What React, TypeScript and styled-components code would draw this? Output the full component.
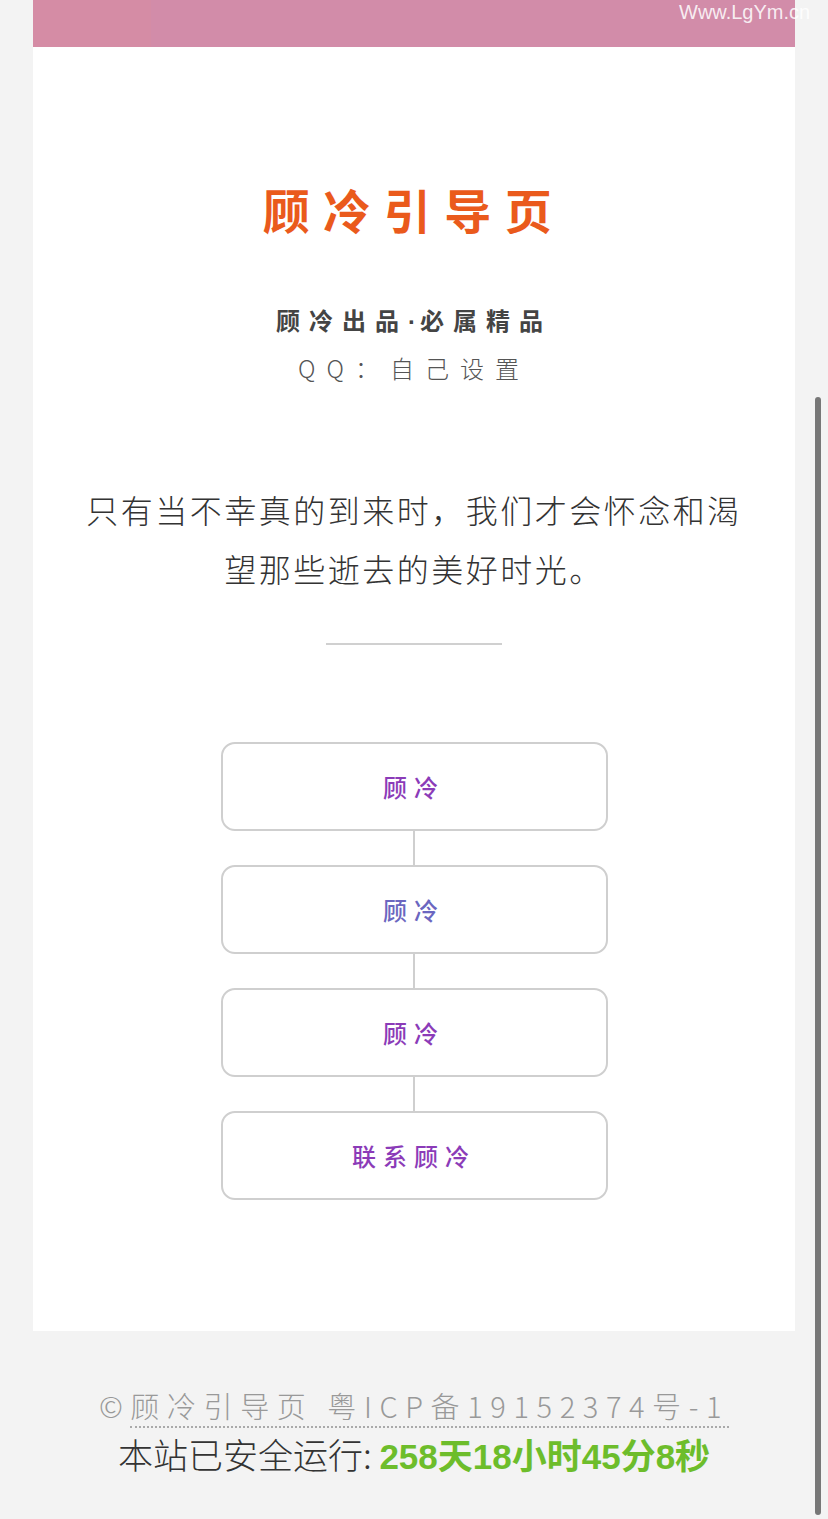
import styled, { createGlobalStyle } from 'styled-components';

const GlobalStyle = createGlobalStyle`
  html, body {
    margin: 0;
    padding: 0;
    background: #f3f3f3;
  }
  body {
    font-family: "Noto Sans CJK SC", "Noto Sans", sans-serif;
  }
`;

const Page = styled.div`
  position: relative;
  min-height: 1519px;
  overflow: hidden;
`;

const Card = styled.div`
  margin: 0 33px;
  background: #fff;
  display: flex;
  flex-direction: column;
  align-items: center;
  padding-bottom: 131px;
`;

const TopBar = styled.div`
  align-self: stretch;
  height: 47px;
  background: linear-gradient(90deg, #d58ca5 0, #d58ca5 118px, #d28ca9 118px, #d28ca9 100%);
`;

const Watermark = styled.div`
  position: absolute;
  top: 1px;
  left: 679px;
  font-family: "Liberation Sans", Arial, sans-serif;
  font-size: 20px;
  color: rgba(255, 255, 255, 0.85);
  white-space: nowrap;
`;

const Title = styled.h1`
  margin: 132px 0 0;
  font-size: 47px;
  line-height: 60px;
  font-weight: 700;
  letter-spacing: 13.5px;
  color: #ea5a1c;
`;

const Sub = styled.div<{ $bold?: boolean }>`
  margin-top: ${(p) => (p.$bold ? '58px' : '0')};
  font-size: 24px;
  line-height: 46px;
  font-weight: ${(p) => (p.$bold ? 700 : 300)};
  letter-spacing: ${(p) => (p.$bold ? '9px' : '11px')};
  color: ${(p) => (p.$bold ? '#444' : '#555')};
`;

const Dot = styled.span`
  font-family: "Liberation Sans", Arial, sans-serif;
  letter-spacing: 4px;
`;

const Quote = styled.p`
  margin: 89px 0 0;
  width: 680px;
  text-align: center;
  font-size: 32px;
  line-height: 59px;
  font-weight: 300;
  letter-spacing: 2.5px;
  color: #333;
`;

const Divider = styled.div`
  margin-top: 45px;
  width: 176px;
  height: 2px;
  background: #d0d0d0;
`;

const Menu = styled.div`
  margin-top: 97px;
  display: flex;
  flex-direction: column;
  align-items: center;
`;

const Button = styled.a<{ $color: string }>`
  box-sizing: border-box;
  width: 387px;
  height: 89px;
  border: 2px solid #cfcfcf;
  border-radius: 14px;
  display: flex;
  align-items: center;
  justify-content: center;
  font-size: 24px;
  font-weight: 500;
  letter-spacing: 7px;
  color: ${(p) => p.$color};
  text-decoration: none;
`;

const Connector = styled.div`
  width: 2px;
  height: 34px;
  background: #cfcfcf;
`;

const Footer = styled.footer`
  padding-top: 50px;
  display: flex;
  flex-direction: column;
  align-items: center;
`;

const Copy = styled.div`
  font-size: 29px;
  line-height: 48px;
  font-weight: 300;
  letter-spacing: 7.6px;
  color: #999;
  white-space: nowrap;
`;

const IcpLink = styled.a`
  color: #999;
  text-decoration: none;
  border-bottom: 2px dotted #aaa;
`;

const RunTime = styled.div`
  font-size: 35px;
  line-height: 50px;
  font-weight: 300;
  color: #333;
  white-space: nowrap;
`;

const Green = styled.span`
  font-family: "Liberation Sans", "Noto Sans CJK SC", sans-serif;
  font-weight: 700;
  color: #6dbd2b;
`;

const ScrollThumb = styled.div`
  position: absolute;
  left: 815px;
  top: 397px;
  width: 6px;
  height: 1118px;
  border-radius: 3px;
  background: #777;
`;

const items = [
  { label: '顾冷', color: '#8b3bb8' },
  { label: '顾冷', color: '#6b66c0' },
  { label: '顾冷', color: '#8b3bb8' },
  { label: '联系顾冷', color: '#8b3bb8' },
];

export default function App() {
  return (
    <Page>
      <GlobalStyle />
      <Card>
        <TopBar />
        <Title>顾冷引导页</Title>
        <Sub $bold>
          顾冷出品<Dot>·</Dot>必属精品
        </Sub>
        <Sub>QQ：自己设置</Sub>
        <Quote>只有当不幸真的到来时，我们才会怀念和渴望那些逝去的美好时光。</Quote>
        <Divider />
        <Menu>
          {items.map((it, i) => (
            <div key={i} style={{ display: 'contents' }}>
              {i > 0 && <Connector />}
              <Button href="#" $color={it.color}>
                {it.label}
              </Button>
            </div>
          ))}
        </Menu>
      </Card>
      <Footer>
        <Copy>
          ©<IcpLink href="#">顾冷引导页 粤ICP备19152374号-1</IcpLink>
        </Copy>
        <RunTime>
          本站已安全运行: <Green>258天18小时45分8秒</Green>
        </RunTime>
      </Footer>
      <Watermark>Www.LgYm.cn</Watermark>
      <ScrollThumb />
    </Page>
  );
}
